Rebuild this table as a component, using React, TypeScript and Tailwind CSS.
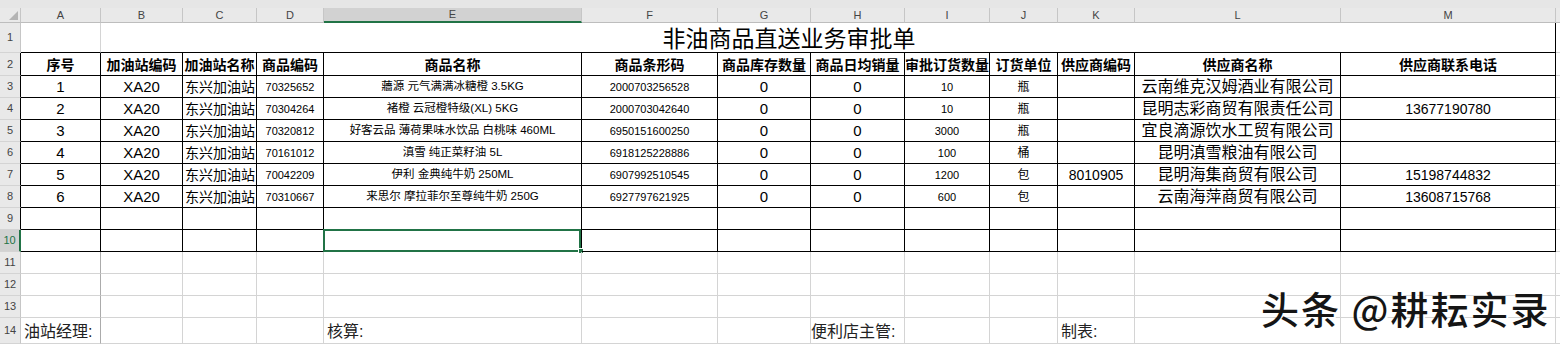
import React from "react";

const COLS = ["A", "B", "C", "D", "E", "F", "G", "H", "I", "J", "K", "L", "M"];

const DATA: string[][] = [
  ["1", "XA20", "东兴加油站", "70325652", "蘠源 元气满满冰糖橙 3.5KG", "2000703256528", "0", "0", "10", "瓶", "", "云南维克汉姆酒业有限公司", ""],
  ["2", "XA20", "东兴加油站", "70304264", "褚橙 云冠橙特级(XL) 5KG", "2000703042640", "0", "0", "10", "瓶", "", "昆明志彩商贸有限责任公司", "13677190780"],
  ["3", "XA20", "东兴加油站", "70320812", "好客云品 薄荷果味水饮品 白桃味 460ML", "6950151600250", "0", "0", "3000", "瓶", "", "宜良滴源饮水工贸有限公司", ""],
  ["4", "XA20", "东兴加油站", "70161012", "滇雪 纯正菜籽油 5L", "6918125228886", "0", "0", "100", "桶", "", "昆明滇雪粮油有限公司", ""],
  ["5", "XA20", "东兴加油站", "70042209", "伊利 金典纯牛奶 250ML", "6907992510545", "0", "0", "1200", "包", "8010905", "昆明海集商贸有限公司", "15198744832"],
  ["6", "XA20", "东兴加油站", "70310667", "来思尔 摩拉菲尔至尊纯牛奶 250G", "6927797621925", "0", "0", "600", "包", "", "云南海萍商贸有限公司", "13608715768"],
];

const HEADERS = ["序号", "加油站编码", "加油站名称", "商品编码", "商品名称", "商品条形码", "商品库存数量", "商品日均销量", "审批订货数量", "订货单位", "供应商编码", "供应商名称", "供应商联系电话"];

const COL_STYLE = [
  "justify-center text-[15px]",
  "justify-center text-[15px]",
  "justify-start pl-[2px] text-[14px]",
  "justify-center text-[11px]",
  "justify-center text-[11.5px]",
  "justify-center text-[11px]",
  "justify-center text-[15px]",
  "justify-center text-[15px]",
  "justify-center text-[11px]",
  "justify-center text-[12px]",
  "justify-center text-[14px]",
  "justify-center text-[16px]",
  "justify-center text-[14px]",
];

function rightColor(r: number, c: number): string {
  if (c === 13) return "border-r-0";
  if (r >= 2 && r <= 10) return "border-r-black";
  if (r === 1) return c === 12 ? "border-r-black" : "border-r-[#d4d4d4]";
  if (c === 0) return "border-r-[#ababab]";
  return "border-r-[#d4d4d4]";
}

function bottomColor(r: number, c: number): string {
  if (c <= 12 && r >= 1 && r <= 10) return "border-b-black";
  return "border-b-[#d4d4d4]";
}

function Cell({ r, c, className = "", children, span = false }: { r: number; c: number; className?: string; children?: React.ReactNode; span?: boolean }) {
  return (
    <div
      className={`relative flex items-center whitespace-nowrap border-r border-b ${rightColor(r, span ? 12 : c)} ${bottomColor(r, c)} ${span ? "col-span-12" : ""} ${className}`}
    >
      {children}
    </div>
  );
}

function RowHead({ r, selected = false }: { r: number; selected?: boolean }) {
  const right = selected ? "border-r-2 border-r-[#217346]" : r >= 2 && r <= 10 ? "border-r border-r-black" : "border-r border-r-[#c6c6c6]";
  return (
    <div
      className={`flex items-center justify-center border-b border-b-[#d4d4d4] ${right} ${selected ? "bg-[#d2d2d2] text-[#217346]" : "bg-[#e9e9e9] text-[#444]"} text-[11px]`}
    >
      {r}
    </div>
  );
}

export default function App() {
  const rows: React.ReactNode[] = [];

  // Row 1
  rows.push(<RowHead key="h1" r={1} />);
  rows.push(<Cell key="a1" r={1} c={0} />);
  rows.push(
    <Cell key="b1" r={1} c={1} span className="justify-center pr-[78px] text-[23px] text-black font-['Noto_Sans_CJK_SC',sans-serif]">
      非油商品直送业务审批单
    </Cell>
  );
  rows.push(<Cell key="x1" r={1} c={13} />);

  // Row 2
  rows.push(<RowHead key="h2" r={2} />);
  HEADERS.forEach((h, i) => {
    rows.push(
      <Cell key={`r2c${i}`} r={2} c={i} className="justify-center pt-[2px] text-[14px] font-bold text-black">
        {h}
      </Cell>
    );
  });
  rows.push(<Cell key="x2" r={2} c={13} />);

  // Data rows 3-8
  DATA.forEach((d, ri) => {
    const r = ri + 3;
    rows.push(<RowHead key={`h${r}`} r={r} />);
    d.forEach((v, ci) => {
      rows.push(
        <Cell key={`r${r}c${ci}`} r={r} c={ci} className={`${COL_STYLE[ci]} pt-[1px] text-black`}>
          {v}
        </Cell>
      );
    });
    rows.push(<Cell key={`x${r}`} r={r} c={13} />);
  });

  // Rows 9-13
  for (let r = 9; r <= 13; r++) {
    rows.push(<RowHead key={`h${r}`} r={r} selected={r === 10} />);
    for (let c = 0; c <= 13; c++) {
      rows.push(
        <Cell key={`r${r}c${c}`} r={r} c={c}>
          {r === 10 && c === 4 ? (
            <>
              <div className="absolute -left-[1px] -top-[1px] h-[calc(100%+2px)] w-[calc(100%+1px)] border-2 border-[#217346]" />
              <div className="absolute -bottom-[3px] -right-[3px] h-[6px] w-[6px] border border-white bg-[#217346]" />
            </>
          ) : null}
        </Cell>
      );
    }
  }

  // Row 14
  rows.push(<RowHead key="h14" r={14} />);
  for (let c = 0; c <= 13; c++) {
    let label = "";
    if (c === 0) label = "油站经理:";
    if (c === 4) label = "核算:";
    if (c === 7) label = "便利店主管:";
    if (c === 10) label = "制表:";
    rows.push(
      <Cell key={`r14c${c}`} r={14} c={c} className={`justify-start text-[16px] text-[#222] ${c === 7 ? "pl-0" : "pl-[3px]"} pt-[2px]`}>
        {label}
      </Cell>
    );
  }

  return (
    <div className="relative h-[346px] w-[1560px] overflow-hidden bg-white font-['Liberation_Sans','Noto_Sans_CJK_SC',sans-serif]">
      <div className="h-[8px] bg-[#e6e6e6]" />
      <div className="grid grid-cols-[21px_80px_82px_74px_67px_258px_136px_93px_94px_85px_68px_77px_206px_215px_1fr] grid-rows-[15px_30px_23px_repeat(11,22px)_26px]">
        {/* Column header row */}
        <div className="relative border-r border-b border-r-[#c6c6c6] border-b-[#bdbdbd] bg-[#e9e9e9]">
          <svg className="absolute left-[9px] top-[3px]" width="9" height="9" viewBox="0 0 9 9">
            <polygon points="9,0 9,9 0,9" fill="#b4b4b4" />
          </svg>
        </div>
        {COLS.map((l, i) => (
          <div
            key={l}
            className={`flex items-center justify-center border-r border-r-[#c6c6c6] text-[11px] text-[#444] ${
              i === 4 ? "border-b-2 border-b-[#217346] bg-[#d2d2d2]" : "border-b border-b-[#bdbdbd] bg-[#e9e9e9]"
            }`}
          >
            {l}
          </div>
        ))}
        <div className="border-b border-b-[#bdbdbd] bg-[#e9e9e9]" />
        {rows}
      </div>
      <div className="absolute left-[1261px] top-[289px] whitespace-nowrap text-[38px] font-medium leading-none tracking-[2px] text-[#151515] [text-shadow:2px_2px_0_#ffffff] font-['Noto_Sans_CJK_SC',sans-serif]">
        头条 @耕耘实录
      </div>
    </div>
  );
}
